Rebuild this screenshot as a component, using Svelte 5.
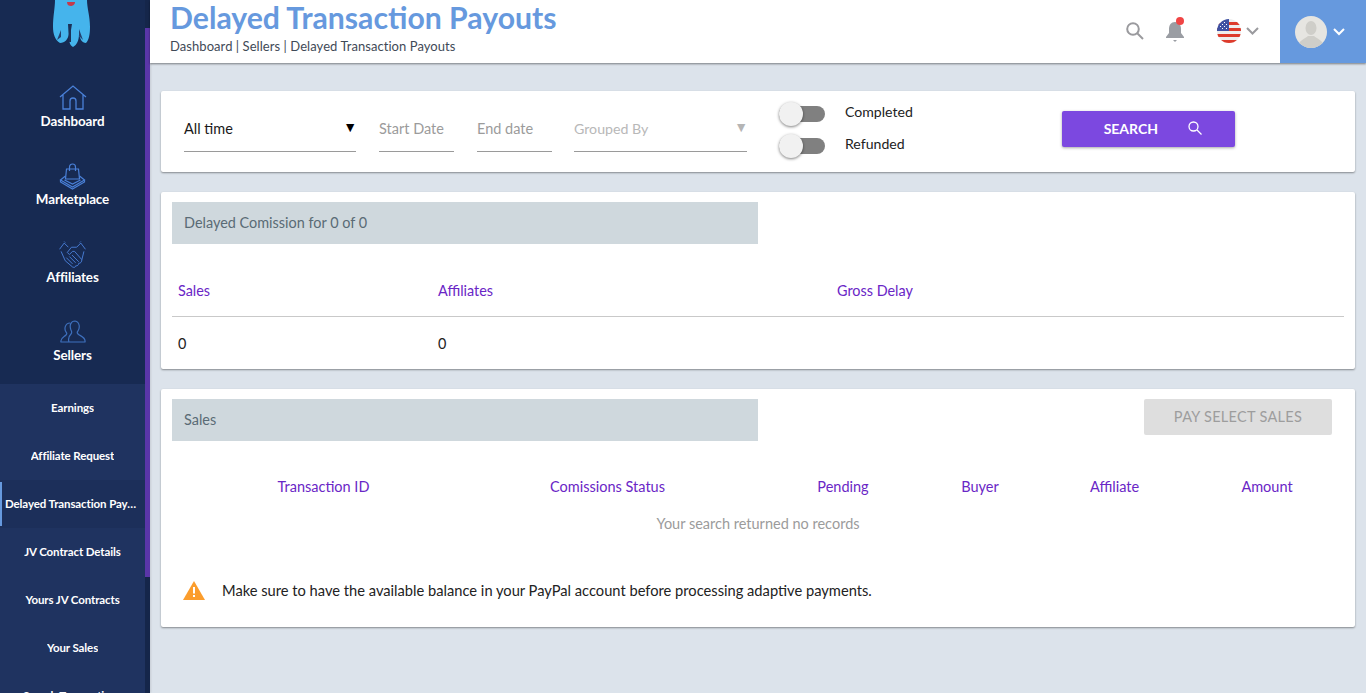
<script>
  const mainNav = [
    { label: 'Dashboard', icon: 'home' },
    { label: 'Marketplace', icon: 'bag' },
    { label: 'Affiliates', icon: 'shake' },
    { label: 'Sellers', icon: 'users' }
  ];
  const subNav = ['Earnings', 'Affiliate Request', 'Delayed Transaction Payouts', 'JV Contract Details', 'Yours JV Contracts', 'Your Sales', 'Search Transactions'];
  const salesCols = ['Transaction ID', 'Comissions Status', 'Pending', 'Buyer', 'Affiliate', 'Amount'];
</script>

<div class="page">
  <aside class="sidebar">
    <div class="rail"><div class="rail-top"></div><div class="rail-fill"></div></div>
    <div class="side-inner">
      <div class="logo">
        <svg width="38" height="47" viewBox="0 0 38 47">
          <path d="M2 0 H34 C34 8 37 16 37 27 C37 34 36 40 33 43 C29 43 27 39 26 34 C26 40 24 45 20 47 C16 45 16 40 16 34 C15 39 12 43 7 43 C2 40 0 34 0 27 C0 16 2 8 2 0 Z" fill="#45b4ec"/>
          <path d="M15 24 L16 42 L18 42 L18 30 L19 24 Z" fill="#1c3157"/>
          <path d="M8 30 L4 40 L8 37 Z M26 29 L30 40 L26 36 Z" fill="#24406e"/>
          <path d="M14 2 H22 C22 5 19 6 18 6 C16 6 14 5 14 2 Z" fill="#c43a4c"/>
        </svg>
      </div>
      <nav class="main-nav">
        {#each mainNav as item}
          <a class="main-item" href="#top">
            <span class="main-icon">
              {#if item.icon === 'home'}
                <svg width="28" height="26" viewBox="0 0 28 26" fill="none" stroke="#4a80d8" stroke-width="1.3">
                  <path d="M1 12 L14 1 L27 12 M4 10 V24 H11 V16 C11 12 17 12 17 16 V24 H24 V10"/>
                </svg>
              {:else if item.icon === 'bag'}
                <svg width="27" height="27" viewBox="0 0 26 27" fill="none" stroke="#4a80d8" stroke-width="1.2">
                  <path d="M7 6 H19 L20 16 H6 Z M10 8 V4 C10 0 16 0 16 4 V8"/>
                  <path d="M6 13 L1 17 L13 24 L25 17 L20 13 M1 17 V19 L13 26 L25 19 V17 M5 17 L13 21 L21 17"/>
                </svg>
              {:else if item.icon === 'shake'}
                <svg width="27" height="27" viewBox="0 0 26 26" fill="none" stroke="#4a80d8" stroke-width="0.9">
                  <path d="M0.5 8 L5 2 L9 6 M25.5 8 L21 2 L17 6 L12 6 L8 11 L10 13 L13 10 L15 10 L22 18"/>
                  <path d="M2 10 L6 19 L13 25 C15 26 16 25 16 24 C18 24 19 23 19 21.5 C21 21.5 22 20 22 18 L24 10"/>
                  <path d="M7 16 L13 22 M10 15 L16 21 M12.5 13.5 L19 20 M5 0.5 L6 1.5 M21 0.5 L20 1.5"/>
                </svg>
              {:else}
                <svg width="26" height="24" viewBox="0 0 26 24" fill="none" stroke="#3e70bd" stroke-width="1.2">
                  <path d="M9 22 H25 C26 17 20 16 18 14 C17 13 17 12 18 11 C20 8 20 2 15 1 C11 1 9 5 11 10 C12 12 12 13 11 14 C9 16 8 19 9 22 Z M9 22 H1 C0 18 4 17 6 15 C7 14 7 13 6 12 C4 9 5 3 10 3"/>
                </svg>
              {/if}
            </span>
            <span class="main-label">{item.label}</span>
          </a>
        {/each}
      </nav>
      <nav class="sub-nav">
        {#each subNav as label, i}
          <a class="sub-item" class:active={i === 2} href="#top"><span class="ell">{label}</span></a>
        {/each}
      </nav>
    </div>
  </aside>

  <div class="content">
    <header class="header">
      <div class="titles">
        <h1>Delayed Transaction Payouts</h1>
        <p>Dashboard | Sellers | Delayed Transaction Payouts</p>
      </div>
      <div class="tools">
        <svg class="t-search" width="18" height="18" viewBox="0 0 18 18" fill="none" stroke="#9a9a9e" stroke-width="2">
          <circle cx="7" cy="7" r="5.8"/><path d="M11 11 L17 17"/>
        </svg>
        <span class="bell">
          <svg width="20" height="24" viewBox="0 0 20 24">
            <path d="M10 3 C6 3 4 6 4 10 V14 L1 18 V19 H19 V18 L16 14 V10 C16 6 14 3 10 3 Z M8 21 H12 L10 23 Z" fill="#9a9da3"/>
          </svg>
          <i class="dot"></i>
        </span>
        <span class="flag">
          <svg width="24" height="24" viewBox="0 0 24 24">
            <defs><clipPath id="flagc"><circle cx="12" cy="12" r="12"/></clipPath></defs>
            <g clip-path="url(#flagc)">
              <rect width="24" height="24" fill="#eee"/>
              <rect y="3" width="24" height="3" fill="#dd3b2c"/>
              <rect y="9" width="24" height="3" fill="#dd3b2c"/>
              <rect y="15" width="24" height="3" fill="#dd3b2c"/>
              <rect y="21" width="24" height="3" fill="#dd3b2c"/>
              <rect width="12" height="12" fill="#3f51a3"/>
              <path d="M3 3h1v1H3zM7 3h1v1H7zM5 5h1v1H5zM9 5h1v1H9zM3 7h1v1H3zM7 7h1v1H7zM5 9h1v1H5zM9 9h1v1H9z" fill="#fff"/>
            </g>
          </svg>
        </span>
        <svg class="chev" width="13" height="8" viewBox="0 0 13 8" fill="none" stroke="#9a9a9e" stroke-width="2"><path d="M1 1 L6.5 6.5 L12 1"/></svg>
      </div>
      <div class="profile">
        <svg width="32" height="32" viewBox="0 0 32 32">
          <defs><clipPath id="avc"><circle cx="16" cy="16" r="16"/></clipPath></defs>
          <g clip-path="url(#avc)">
            <rect width="32" height="32" fill="#e6e5e1"/>
            <ellipse cx="16" cy="12" rx="5.5" ry="7" fill="#cfcec9"/>
            <path d="M3 32 C3 24 10 23 13 20 H19 C22 23 29 24 29 32 Z" fill="#cfcec9"/>
          </g>
        </svg>
        <svg width="12" height="8" viewBox="0 0 12 8" fill="none" stroke="#fff" stroke-width="2"><path d="M1 1 L6 6 L11 1"/></svg>
      </div>
    </header>

    <main class="main">
      <section class="card filters">
        <div class="field f-range"><span class="val">All time</span><span class="caret">▼</span></div>
        <div class="field f-start"><span class="ph">Start Date</span></div>
        <div class="field f-end"><span class="ph">End date</span></div>
        <div class="field f-group"><span class="ph light">Grouped By</span><span class="caret grey">▼</span></div>
        <div class="toggles">
          <div class="toggle-row"><span class="switch"><i></i></span><span class="t-label">Completed</span></div>
          <div class="toggle-row"><span class="switch"><i></i></span><span class="t-label">Refunded</span></div>
        </div>
        <button class="search-btn">
          <span>SEARCH</span>
          <svg width="14" height="14" viewBox="0 0 14 14" fill="none" stroke="#fff" stroke-width="1.3"><circle cx="5.5" cy="5.5" r="4.5"/><path d="M9 9 L13.5 13.5"/></svg>
        </button>
      </section>

      <section class="card delayed">
        <div class="band">Delayed Comission for 0 of 0</div>
        <div class="d-grid d-head">
          <span>Sales</span><span>Affiliates</span><span>Gross Delay</span>
        </div>
        <div class="d-grid d-row">
          <span>0</span><span>0</span><span></span>
        </div>
      </section>

      <section class="card sales">
        <div class="sales-top">
          <div class="band">Sales</div>
          <button class="pay-btn">PAY SELECT SALES</button>
        </div>
        <div class="s-head">
          {#each salesCols as label}
            <span>{label}</span>
          {/each}
        </div>
        <div class="empty">Your search returned no records</div>
        <div class="note">
          <svg width="22" height="19" viewBox="0 0 22 19">
            <path d="M11 0 L22 19 H0 Z" fill="#fb9d2d"/>
            <rect x="10" y="6" width="2" height="6.5" fill="#fff"/>
            <rect x="10" y="14" width="2" height="2" fill="#fff"/>
          </svg>
          <span>Make sure to have the available balance in your PayPal account before processing adaptive payments.</span>
        </div>
      </section>
    </main>
  </div>
</div>

<style>
  :global(body) { margin: 0; background: #dce3eb; font-family: "Lato", "Noto Sans", sans-serif; overflow: hidden; }
  .page { display: flex; height: 693px; overflow: hidden; }
  a { text-decoration: none; color: inherit; }

  .sidebar { width: 150px; flex: none; display: flex; flex-direction: row-reverse; background: #172a52; overflow: hidden; box-shadow: 1px 0 2px rgba(0,0,0,.1); }
  .rail { width: 5px; flex: none; background: #15264a; display: flex; flex-direction: column; }
  .rail-top { height: 28px; }
  .rail-fill { height: 549px; background: #5a36a8; }
  .side-inner { width: 145px; flex: none; }
  .logo { height: 47px; display: flex; justify-content: center; padding-right: 2px; }
  .main-nav { padding-top: 26px; display: flex; flex-direction: column; }
  .main-item { height: 78px; box-sizing: border-box; display: flex; flex-direction: column; align-items: center; padding-top: 11px; color: #fff; }
  .main-icon { height: 28px; display: flex; align-items: center; justify-content: center; }
  .main-label { font-size: 13.4px; font-weight: 700; line-height: 18px; letter-spacing: -.1px; }
  .sub-nav { display: flex; flex-direction: column; background: #1f3360; margin-top: -1px; }
  .sub-item { height: 48px; flex: none; box-sizing: border-box; display: flex; align-items: center; justify-content: center; color: #fff; font-size: 11.5px; font-weight: 700; padding: 0 5px 2px 5px; letter-spacing: -.1px; position: relative; }
  .ell { white-space: nowrap; overflow: hidden; text-overflow: ellipsis; }
  .sub-item.active { background: #1c2f5a; }
  .sub-item.active::before { content: ""; position: absolute; left: 0; top: 2px; bottom: 2px; width: 2px; background: #6699de; }

  .content { flex: 1; min-width: 0; display: flex; flex-direction: column; }
  .header { height: 63px; flex: none; background: #fff; display: flex; align-items: stretch; box-shadow: 0 1px 2px rgba(0,0,0,.45); position: relative; }
  .titles { flex: 1; padding: 0 0 0 20px; }
  h1 { margin: 0; font-size: 30.2px; line-height: 36px; font-weight: 700; color: #6699de; margin-top: -1px; }
  p { margin: 2px 0 0; font-size: 13px; line-height: 18px; color: #3f4a57; letter-spacing: .06px; }
  .tools { display: flex; align-items: center; padding-right: 21px; }
  .t-search { margin-right: 21px; margin-top: -2px; }
  .bell { position: relative; display: block; height: 24px; margin-right: 32px; margin-top: -2px; }
  .dot { position: absolute; top: -2px; right: 1px; width: 8px; height: 8px; border-radius: 50%; background: #f04545; }
  .flag { height: 24px; margin-right: 5px; margin-top: -2px; }
  .chev { margin-top: -2px; }
  .profile { width: 86px; flex: none; background: #6699de; display: flex; align-items: center; padding-left: 15px; gap: 6px; box-sizing: border-box; }

  .main { flex: 1; padding: 28px 11px 0; display: flex; flex-direction: column; gap: 20px; }
  .card { background: #fff; border-radius: 2px; box-shadow: 0 1px 2px rgba(0,0,0,.4); box-sizing: border-box; }
  .filters { height: 81px; display: flex; align-items: flex-start; position: relative; }
  .field { height: 41px; box-sizing: border-box; margin-top: 20px; padding-bottom: 6px; border-bottom: 1px solid #9a9a9a; display: flex; align-items: center; justify-content: space-between; font-size: 14.5px; }
  .f-range { width: 172px; margin-left: 23px; }
  .f-start { width: 75px; margin-left: 23px; }
  .f-end { width: 75px; margin-left: 23px; }
  .f-group { width: 173px; margin-left: 22px; }
  .f-group .ph { font-size: 14.2px; }
  .val { color: #1a1a1a; }
  .ph { color: #9b9b9b; }
  .ph.light { color: #b8b8b8; }
  .caret { font-size: 14px; color: #000; margin-top: -3px; margin-right: -1px; }
  .caret.grey { color: #b5b5b5; }
  .toggles { margin-left: 32px; margin-top: 11px; display: flex; flex-direction: column; gap: 8px; }
  .toggle-row { display: flex; align-items: center; height: 24px; }
  .switch { width: 46px; height: 16px; border-radius: 8px; background: #808080; position: relative; display: block; }
  .switch i { position: absolute; left: 0; top: -4px; width: 24px; height: 24px; border-radius: 50%; background: #f1f1f1; box-shadow: 0 1px 3px rgba(0,0,0,.5); }
  .t-label { margin-left: 20px; margin-top: -5px; font-size: 14.1px; color: #222; }
  .search-btn { margin-left: 149px; margin-top: 20px; width: 173px; height: 36px; padding: 0 0 2px 9px; border: 0; border-radius: 2px; background: #7c48e0; color: #fff; font: 700 14px "Lato", sans-serif; display: flex; align-items: center; justify-content: center; gap: 30px; box-shadow: 0 1px 3px rgba(0,0,0,.35); }

  .band { width: 586px; height: 42px; box-sizing: border-box; background: #cfd8dd; color: #5a6b75; font-size: 14.45px; display: flex; align-items: center; padding: 0 0 2px 12px; }
  .delayed { height: 177px; padding: 10px 11px 0; }
  .d-grid { display: grid; grid-template-columns: 260px 399px 1fr; padding-left: 6px; font-size: 14.4px; }
  .d-head { margin-top: 38px; height: 34px; color: #6a26c6; border-bottom: 1px solid #c9c9c9; align-items: flex-start; }
  .d-row { height: 52px; align-items: center; color: #222; }
  .sales { height: 238px; padding: 10px 11px 0; }
  .sales-top { display: flex; justify-content: space-between; align-items: flex-start; }
  .pay-btn { width: 188px; height: 36px; margin-right: 12px; padding: 0 0 2px; border: 0; border-radius: 2px; background: #dedede; color: #9d9d9d; font: 14.5px "Lato", sans-serif; letter-spacing: .3px; }
  .s-head { height: 22px; margin-top: 37px; color: #6a26c6; font-size: 14.5px; display: grid; grid-template-columns: 303px 265px 206px 68px 201px 104px; text-align: center; }
  .empty { text-align: center; width: 1172px; color: #9b9b9b; font-size: 14.5px; margin-top: 15px; }
  .note { display: flex; align-items: center; gap: 17px; margin-top: 49px; padding-left: 11px; font-size: 14.68px; color: #222; }
</style>
